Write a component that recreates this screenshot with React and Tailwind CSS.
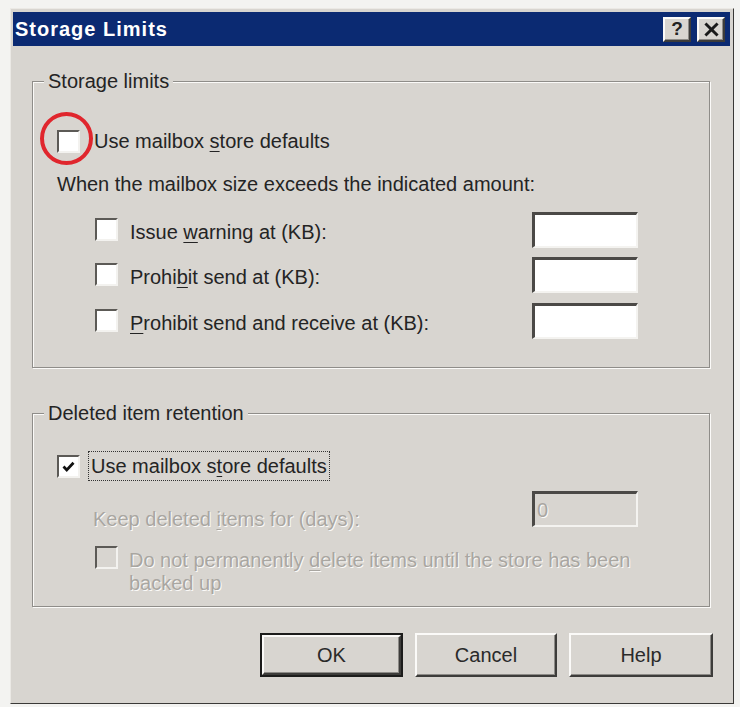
import { useState } from "react"

const sunken = "border-2 border-t-[#5c5a56] border-l-[#5c5a56] border-r-[#f3f2ef] border-b-[#f3f2ef]"
const raised = "border-2 border-t-[#fbfaf8] border-l-[#fbfaf8] border-r-[#3d3c3a] border-b-[#3d3c3a] shadow-[inset_-1px_-1px_0_#8d8b87]"
const dimText = "text-[#a9a6a1] [text-shadow:1px_1px_0_#fbfaf8]"

function Key({ children }) {
  return <span className="underline underline-offset-[3px] decoration-1">{children}</span>
}

function CheckBox({ checked, disabled, onToggle }) {
  return (
    <button
      type="button"
      onClick={disabled ? undefined : onToggle}
      className={`flex h-[23px] w-[23px] shrink-0 items-center justify-center ${sunken} ${disabled ? "bg-[#d8d5d0]" : "bg-white"}`}
    >
      {checked && (
        <svg viewBox="0 0 12 12" className="h-[15px] w-[15px]">
          <path d="M2 6 L4.6 8.8 L10 3" fill="none" stroke="#111" strokeWidth="2.2" />
        </svg>
      )}
    </button>
  )
}

function Field({ value, disabled }) {
  return (
    <div
      className={`flex h-[36px] w-[106px] items-center border-t-[3px] border-l-[3px] border-r-2 border-b-2 border-t-[#4b4946] border-l-[#4b4946] border-r-[#f4f3f0] border-b-[#f4f3f0] pl-[2px] ${disabled ? "bg-[#d8d5d0] " + dimText : "bg-white"}`}
    >
      {value}
    </div>
  )
}

function GroupBox({ title, height, children }) {
  return (
    <div
      className="relative w-[678px] border border-[#8f8d89] shadow-[inset_1px_1px_0_#fbfaf8,1px_1px_0_#fbfaf8]"
      style={{ height }}
    >
      <span className="absolute left-[11px] top-[-13px] bg-[#d8d5d0] px-[4px] leading-[24px]">{title}</span>
      {children}
    </div>
  )
}

function LimitRow({ label, checked, onToggle }) {
  return (
    <div className="ml-[38px] flex h-[35px] w-[543px] items-center justify-between">
      <div className="flex items-center gap-[12px]">
        <CheckBox checked={checked} onToggle={onToggle} />
        <span className="mt-[4px] leading-[24px]">{label}</span>
      </div>
      <Field />
    </div>
  )
}

function DialogButton({ children, isDefault, width }) {
  return (
    <button
      type="button"
      className={`h-[44px] ${isDefault ? "border-2 border-[#1c1c1b]" : ""}`}
      style={{ width }}
    >
      <span className={`flex h-full w-full items-center justify-center bg-[#d8d5d0] text-[#2a2a2a] ${raised}`}>
        {children}
      </span>
    </button>
  )
}

export default function App() {
  const [limits, setLimits] = useState({ defaults: false, warn: false, send: false, both: false })
  const [retention, setRetention] = useState(true)
  const flip = (k) => setLimits((s) => ({ ...s, [k]: !s[k] }))

  return (
    <div className="h-[707px] w-[740px] bg-[#f3f3f1] pl-[10px] pt-[8px] font-['Liberation_Sans',Arial,sans-serif] text-[20px] text-[#242424]">
      <div className="flex h-[696px] w-[724px] flex-col border border-t-[#ebe9e5] border-l-[#ebe9e5] border-r-[#3a3937] border-b-[#3a3937] bg-[#d8d5d0] pl-[2px] pr-[3px] pt-[3px]">
        {/* title bar */}
        <div className="flex h-[34px] items-center justify-between bg-[#0b2a72] pl-[2px] pr-[5px]">
          <span className="font-bold tracking-[1px] text-white">Storage Limits</span>
          <div className="flex gap-[6px]">
            <span className={`flex h-[25px] w-[28px] items-center justify-center bg-[#d8d5d0] text-[19px] font-bold text-[#222] ${raised}`}>?</span>
            <span className={`flex h-[25px] w-[28px] items-center justify-center bg-[#d8d5d0] ${raised}`}>
              <svg viewBox="0 0 14 12" className="h-[15px] w-[17px]">
                <path d="M2 1 L12 11 M12 1 L2 11" stroke="#1a1a1a" strokeWidth="2.4" />
              </svg>
            </span>
          </div>
        </div>

        <div className="flex flex-col pl-[19px]">
          <div className="mt-[35px]">
            <GroupBox title="Storage limits" height={287}>
              <div className="flex flex-col pl-[24px]">
                <div className="mt-[47px] flex h-[24px] items-center gap-[14px]">
                  <CheckBox checked={limits.defaults} onToggle={() => flip("defaults")} />
                  <span className="leading-[24px]">
                    Use mailbox <Key>s</Key>tore defaults
                  </span>
                </div>
                <div className="mt-[19px] leading-[24px]">When the mailbox size exceeds the indicated amount:</div>
                <div className="mt-[16px]">
                  <LimitRow
                    label={<>Issue <Key>w</Key>arning at (KB):</>}
                    checked={limits.warn}
                    onToggle={() => flip("warn")}
                  />
                </div>
                <div className="mt-[10px]">
                  <LimitRow
                    label={<>Prohi<Key>b</Key>it send at (KB):</>}
                    checked={limits.send}
                    onToggle={() => flip("send")}
                  />
                </div>
                <div className="mt-[11px]">
                  <LimitRow
                    label={<><Key>P</Key>rohibit send and receive at (KB):</>}
                    checked={limits.both}
                    onToggle={() => flip("both")}
                  />
                </div>
              </div>
              {/* annotation circle */}
              <span className="absolute left-[7px] top-[30px] h-[53px] w-[53px] rounded-full border-[4px] border-[#e0262d]" />
            </GroupBox>
          </div>

          <div className="mt-[45px]">
            <GroupBox title="Deleted item retention" height={194}>
              <div className="flex flex-col pl-[24px]">
                <div className="mt-[37px] flex h-[30px] items-center gap-[8px]">
                  <CheckBox checked={retention} onToggle={() => setRetention(!retention)} />
                  <span className="flex h-[30px] items-center border border-dotted border-[#333] px-[2px] leading-[24px]">
                    Use mailbox s<Key>t</Key>ore defaults
                  </span>
                </div>
                <div className="mt-[10px] flex h-[36px] w-[581px] items-start justify-between">
                  <span className={`ml-[36px] mt-[16px] leading-[24px] ${dimText}`}>
                    Keep deleted <Key>i</Key>tems for (days):
                  </span>
                  <Field value="0" disabled />
                </div>
                <div className="ml-[38px] mt-[19px] flex items-start gap-[11px]">
                  <CheckBox disabled />
                  <div className={`mt-[3px] flex flex-col leading-[23px] ${dimText}`}>
                    <span className="whitespace-nowrap">
                      Do not permanently <Key>d</Key>elete items until the store has been
                    </span>
                    <span>backed up</span>
                  </div>
                </div>
              </div>
            </GroupBox>
          </div>

          <div className="ml-[228px] mt-[26px] flex gap-[12px]">
            <DialogButton isDefault width={143}>OK</DialogButton>
            <DialogButton width={142}>Cancel</DialogButton>
            <DialogButton width={144}>Help</DialogButton>
          </div>
        </div>
      </div>
    </div>
  )
}
